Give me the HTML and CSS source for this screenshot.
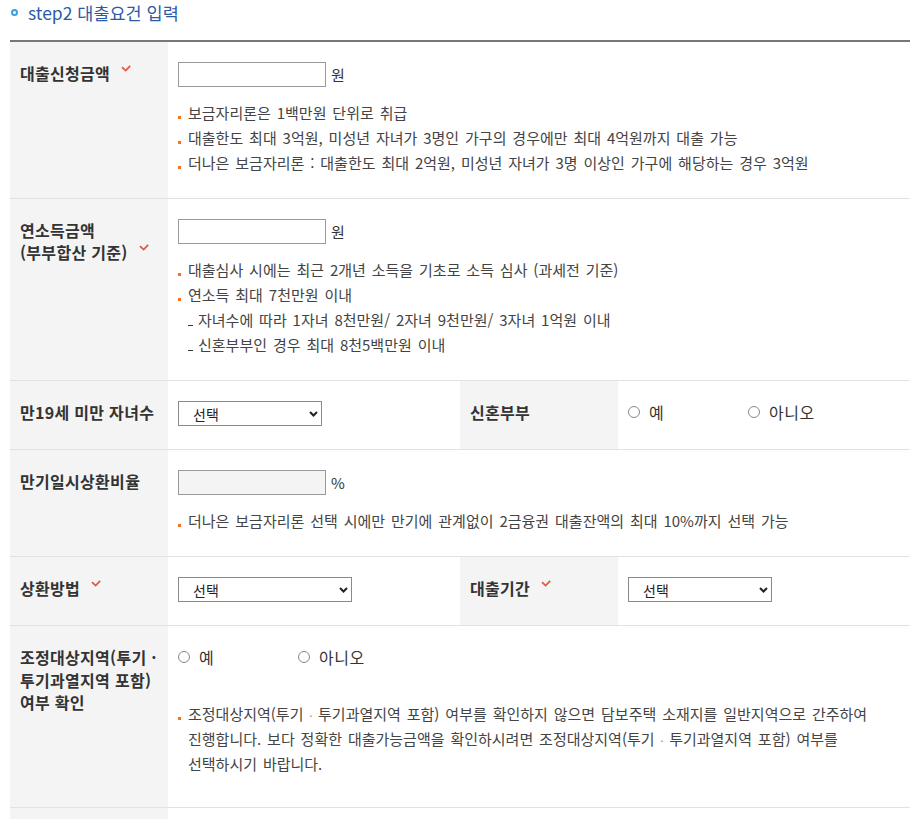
FILE: index.html
```html
<!DOCTYPE html>
<html lang="ko">
<head>
    <meta charset="UTF-8">
    <meta name="viewport" content="width=device-width, initial-scale=1.0">
    <title>대출요건 입력</title>
    <link rel="stylesheet" href="styles.css">
</head>
<body>
    <div class="step">
        <h2 class="step-title">step2 대출요건 입력</h2>

        <table class="form-table">
            <colgroup>
                <col class="col-th">
                <col class="col-td">
                <col class="col-th">
                <col class="col-td">
            </colgroup>
            <tbody>
                <!-- 대출신청금액 -->
                <tr>
                    <th>대출신청금액<svg class="req" viewBox="0 0 10 7"><path d="M1 2.2 L4.6 5.6 L9.2 0.8"/></svg></th>
                    <td colspan="3">
                        <div class="field">
                            <input type="text" class="inp">
                            <span class="unit">원</span>
                        </div>
                        <ul class="notes">
                            <li>보금자리론은 1백만원 단위로 취급</li>
                            <li>대출한도 최대 3억원, 미성년 자녀가 3명인 가구의 경우에만 최대 4억원까지 대출 가능</li>
                            <li>더나은 보금자리론 : 대출한도 최대 2억원, 미성년 자녀가 3명 이상인 가구에 해당하는 경우 3억원</li>
                        </ul>
                    </td>
                </tr>

                <!-- 연소득금액 -->
                <tr>
                    <th>연소득금액<br>(부부합산 기준)<svg class="req" viewBox="0 0 10 7"><path d="M1 2.2 L4.6 5.6 L9.2 0.8"/></svg></th>
                    <td colspan="3">
                        <div class="field">
                            <input type="text" class="inp">
                            <span class="unit">원</span>
                        </div>
                        <ul class="notes">
                            <li>대출심사 시에는 최근 2개년 소득을 기초로 소득 심사 (과세전 기준)</li>
                            <li>연소득 최대 7천만원 이내</li>
                            <li class="sub">자녀수에 따라 1자녀 8천만원/ 2자녀 9천만원/ 3자녀 1억원 이내</li>
                            <li class="sub">신혼부부인 경우 최대 8천5백만원 이내</li>
                        </ul>
                    </td>
                </tr>

                <!-- 자녀수 / 신혼부부 -->
                <tr class="row-plain">
                    <th>만19세 미만 자녀수</th>
                    <td>
                        <div class="field">
                            <span class="select w-144">
                                <select><option>선택</option></select>
                                <svg class="select-arrow" viewBox="0 0 9 6"><path d="M1 1 L4.5 4.5 L8 1"/></svg>
                            </span>
                        </div>
                    </td>
                    <th>신혼부부</th>
                    <td>
                        <div class="field field-radio">
                            <label class="radio"><input type="radio" name="newlywed"> 예</label>
                            <label class="radio"><input type="radio" name="newlywed"> 아니오</label>
                        </div>
                    </td>
                </tr>

                <!-- 만기일시상환비율 -->
                <tr>
                    <th>만기일시상환비율</th>
                    <td colspan="3">
                        <div class="field">
                            <input type="text" class="inp" disabled>
                            <span class="unit">%</span>
                        </div>
                        <ul class="notes">
                            <li>더나은 보금자리론 선택 시에만 만기에 관계없이 2금융권 대출잔액의 최대 10%까지 선택 가능</li>
                        </ul>
                    </td>
                </tr>

                <!-- 상환방법 / 대출기간 -->
                <tr class="row-plain">
                    <th>상환방법<svg class="req" viewBox="0 0 10 7"><path d="M1 2.2 L4.6 5.6 L9.2 0.8"/></svg></th>
                    <td>
                        <div class="field">
                            <span class="select w-174">
                                <select><option>선택</option></select>
                                <svg class="select-arrow" viewBox="0 0 9 6"><path d="M1 1 L4.5 4.5 L8 1"/></svg>
                            </span>
                        </div>
                    </td>
                    <th>대출기간<svg class="req" viewBox="0 0 10 7"><path d="M1 2.2 L4.6 5.6 L9.2 0.8"/></svg></th>
                    <td>
                        <div class="field">
                            <span class="select w-144">
                                <select><option>선택</option></select>
                                <svg class="select-arrow" viewBox="0 0 9 6"><path d="M1 1 L4.5 4.5 L8 1"/></svg>
                            </span>
                        </div>
                    </td>
                </tr>

                <!-- 조정대상지역 -->
                <tr class="row-region">
                    <th>조정대상지역(투기 ·<br>투기과열지역 포함)<br>여부 확인</th>
                    <td colspan="3">
                        <div class="field field-radio">
                            <label class="radio"><input type="radio" name="region"> 예</label>
                            <label class="radio"><input type="radio" name="region"> 아니오</label>
                        </div>
                        <ul class="notes">
                            <li>조정대상지역(투기 <span class="dot">·</span> 투기과열지역 포함) 여부를 확인하지 않으면 담보주택 소재지를 일반지역으로 간주하여 진행합니다. 보다 정확한 대출가능금액을 확인하시려면 조정대상지역(투기 <span class="dot">·</span> 투기과열지역 포함) 여부를 선택하시기 바랍니다.</li>
                        </ul>
                    </td>
                </tr>

                <!-- next row (cut off) -->
                <tr class="row-plain">
                    <th>&nbsp;</th>
                    <td colspan="3">&nbsp;</td>
                </tr>
            </tbody>
        </table>
    </div>
</body>
</html>
```

FILE: styles.css
```css
/* Base */
body {
    margin: 0;
    font-family: "Noto Sans CJK KR", "Noto Sans", sans-serif;
    color: #333;
    background: #fff;
}

.step {
    padding: 0 6px 0 10px;
}

/* Step title */
.step-title {
    position: relative;
    margin: 0 0 14px;
    padding-left: 18px;
    font-size: 17.5px;
    font-weight: 400;
    line-height: 26px;
    color: #2b5ba6;
}

.step-title::before {
    content: '';
    position: absolute;
    left: 1px;
    top: 9px;
    width: 7px;
    height: 7px;
    border: 2px solid #3d9fe2;
    border-radius: 50%;
    box-sizing: border-box;
    background: #fff;
}

/* Form table */
.form-table {
    width: 900px;
    table-layout: fixed;
    border-collapse: collapse;
    border-top: 2px solid #777;
}

.col-th {
    width: 158px;
}

.col-td {
    width: 292px;
}

.form-table tr {
    border-bottom: 1px solid #e2e2e2;
}

.form-table th {
    padding: 20px 10px;
    background: #f4f4f4;
    text-align: left;
    vertical-align: top;
    font-size: 16px;
    font-weight: 700;
    letter-spacing: 0.3px;
    line-height: 22px;
    color: #333;
}

.form-table td {
    padding: 20px 10px 23px;
    vertical-align: top;
    font-size: 15px;
    color: #444;
}

.row-plain td {
    padding-bottom: 23px;
}

/* Required mark */
.req {
    width: 10px;
    height: 7px;
    margin: 3px 0 0 11px;
    vertical-align: top;
    fill: none;
    stroke: #e8583c;
    stroke-width: 1.8;
}

/* Fields */
.field {
    display: flex;
    align-items: center;
    height: 25px;
}

.field-radio {
    height: 22px;
}

.inp {
    width: 148px;
    height: 25px;
    margin: 0;
    padding: 0 6px;
    box-sizing: border-box;
    border: 1px solid #9a9a9a;
    font: inherit;
    background: #fff;
}

.inp:disabled {
    background: #f4f4f4;
}

.unit {
    margin-left: 5px;
    font-size: 15px;
    color: #333;
}

/* Select box */
.select {
    position: relative;
    display: inline-block;
    height: 25px;
}

.select select {
    width: 100%;
    height: 25px;
    margin: 0;
    padding: 0 24px 0 14px;
    border: 1px solid #8a8a8a;
    border-radius: 0;
    background: #fff;
    font-family: inherit;
    font-size: 14px;
    color: #222;
    -webkit-appearance: none;
    appearance: none;
}

.w-144 {
    width: 144px;
}

.w-174 {
    width: 174px;
}

.select-arrow {
    position: absolute;
    right: 4px;
    top: 10px;
    width: 9px;
    height: 6px;
    fill: none;
    stroke: #222;
    stroke-width: 2;
    pointer-events: none;
}

/* Radio */
.radio {
    display: inline-flex;
    align-items: center;
    width: 120px;
    font-size: 16px;
    letter-spacing: 0.5px;
    color: #333;
}

.radio input {
    width: 12px;
    height: 12px;
    margin: 0 9px 0 0;
    border: 1px solid #888;
    border-radius: 50%;
    background: #fff;
    -webkit-appearance: none;
    appearance: none;
}

/* Notes */
.notes {
    margin: 13px 0 0;
    padding: 0;
    list-style: none;
    line-height: 25px;
    word-spacing: 1.7px;
    word-break: keep-all;
}

.notes li {
    padding-left: 10px;
}

.notes li::before {
    content: '';
    display: inline-block;
    width: 3px;
    height: 3px;
    margin: 0 7px 0 -10px;
    background: #f37321;
    vertical-align: baseline;
}

.notes li.sub {
    padding-left: 20px;
}

.notes li.sub::before {
    width: 5px;
    height: 1px;
    margin-right: 5px;
    background: #333;
}

.dot {
    font-size: 10px;
    line-height: 1;
    color: #777;
}

/* Region row */
.row-region .notes {
    margin-top: 33px;
}

.row-region td {
    padding-bottom: 31px;
}

.row-region th {
    line-height: 22.5px;
}
```
